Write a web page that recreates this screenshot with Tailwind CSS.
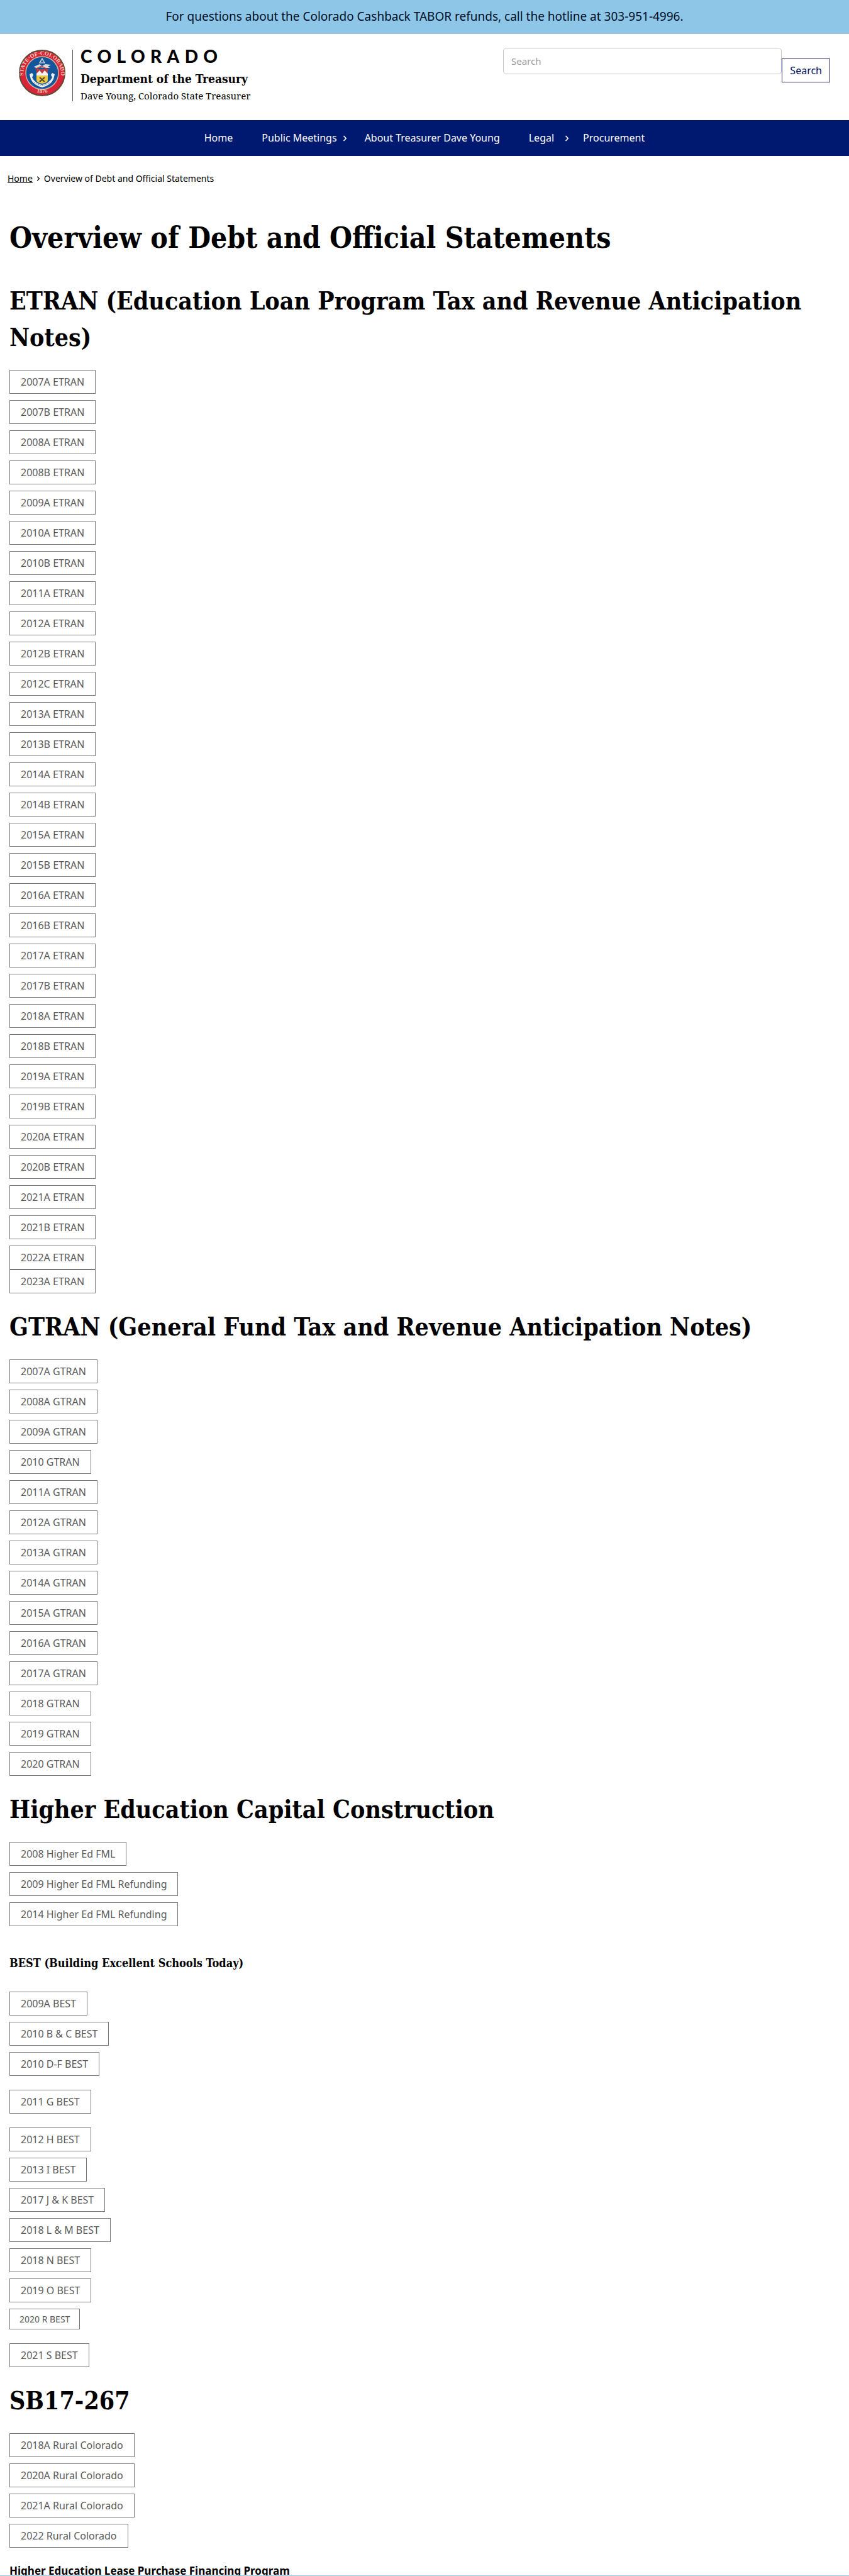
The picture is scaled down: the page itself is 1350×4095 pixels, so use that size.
<!DOCTYPE html>
<html lang="en">
<head>
<meta charset="utf-8">
<meta name="viewport" content="width=device-width, initial-scale=1">
<title>Overview of Debt and Official Statements | Department of the Treasury</title>
<script src="https://cdn.jsdelivr.net/npm/@tailwindcss/browser@4"></script>
</head>
<body class="bg-white font-['Noto_Sans',sans-serif] text-black">
<div class="border-b border-[#a9bdd0] bg-[#8ec6e7] px-4 py-[13px] text-center text-[19px] leading-[27px] text-[#001026]">For questions about the Colorado Cashback TABOR refunds, call the hotline at 303-951-4996.</div>

<header class="flex items-start justify-between pt-[22px] pr-[30px] pb-[30px] pl-[30px]">
  <a href="#" class="mt-[3px] flex items-start text-black">
    <svg class="size-[74px]" viewBox="0 0 74 74" role="img" aria-label="Seal of the State of Colorado">
      <defs>
        <path id="arcTop" d="M7.5 44 A 30 30 0 1 1 66.500 44"/>
        <path id="arcBottom" d="M17 62 A 32 32 0 0 0 57 62"/>
      </defs>
      <circle cx="37" cy="37" r="36" fill="#d92336" stroke="#5b4a35" stroke-width="2"/>
      <circle cx="37" cy="37" r="26" fill="#14569c" stroke="#c9b5a0" stroke-width="1.500"/>
      <text font-family="Liberation Serif" font-size="9" font-weight="bold" fill="#f6cdbb"><textPath href="#arcTop" startOffset="50%" text-anchor="middle">STATE·OF·COLORADO</textPath></text>
      <text font-family="Liberation Serif" font-size="9" font-weight="bold" fill="#f6cdbb"><textPath href="#arcBottom" startOffset="50%" text-anchor="middle">1876</textPath></text>
      <path d="M37 14 L41 21 H33 Z" fill="#2c68a5" stroke="#e9e6da" stroke-width="1.200"/>
      <path d="M24 27 L33 23 L37 26 L42 23 L51 24 L46 27 L50 29 L40 29 L34 28 L29 30 Z" fill="#d9dcd6"/>
      <path d="M26 31 L36 26 L47 32" fill="none" stroke="#c33b3f" stroke-width="1.500"/>
      <path d="M28 31 H46 V41 H28 Z" fill="#b83b42"/>
      <path d="M28 38 L33 33 L37 38 L41 33 L46 38 V41 H28 Z" fill="#f3f3f3"/>
      <path d="M28 41 H46 V49 Q45 53 37 54 Q29 53 28 49 Z" fill="#edc843"/>
      <path d="M33 44 L41 51 M41 44 L33 51" stroke="#4f4322" stroke-width="2"/>
      <path d="M17 39 L21 37 L23 40 L21 44 Q25 53 37 56 Q49 53 53 44 L51 40 L53 37 L57 39 L55 47 Q50 57 37 60 Q24 57 19 47 Z" fill="#eef0ee"/>
      <path d="M24 52 Q37 61 50 52" fill="none" stroke="#5a7fa9" stroke-width="1" stroke-dasharray="2 1.500"/>
    </svg>
    <span class="ml-[11px] flex flex-col border-l border-[#555] pl-3">
      <span class="font-['Lato',sans-serif] text-[28px] leading-5 font-black tracking-[0.3em]">COLORADO</span>
      <span class="mt-3 font-['DejaVu_Serif_Condensed','DejaVu_Serif',serif] text-[19px] leading-7 font-bold">Department of the Treasury</span>
      <span class="mt-1 font-['Noto_Serif',serif] text-[15px] leading-[18px] font-normal">Dave Young, Colorado State Treasurer</span>
    </span>
  </a>
  <form class="flex w-[520px] items-start" role="search">
    <label for="search" class="sr-only">Search</label>
    <input id="search" type="search" placeholder="Search" class="h-[42px] min-w-0 flex-1 rounded-[5px] border border-[#c4c4c4] px-3 text-[15px] placeholder:text-[#999]">
    <button type="submit" class="mt-[17px] h-[38px] border border-[#2a2a66] px-3 text-[16px] leading-6 text-[#000f60]">Search</button>
  </form>
</header>

<nav aria-label="Main" class="bg-[#001970] py-4 text-[16px] leading-[25px] text-white">
  <ul class="flex justify-center">
    <li><a href="#" class="block px-[23px]">Home</a></li>
    <li class="flex items-center"><a href="#" class="pl-[23px]">Public Meetings</a>
      <svg class="mr-[28px] ml-[9px] h-[10px] w-[7px]" viewBox="0 0 7 10" fill="none" stroke="currentColor" stroke-width="1.600"><path d="M1.500 1 L5.200 5 L1.500 9"/></svg></li>
    <li><a href="#" class="block pr-[23px]">About Treasurer Dave Young</a></li>
    <li class="flex items-center"><a href="#" class="pl-[23px]">Legal</a>
      <svg class="mr-[22px] ml-[17px] h-[10px] w-[7px]" viewBox="0 0 7 10" fill="none" stroke="currentColor" stroke-width="1.600"><path d="M1.500 1 L5.200 5 L1.500 9"/></svg></li>
    <li><a href="#" class="block pr-[23px]">Procurement</a></li>
  </ul>
</nav>

<nav aria-label="Breadcrumb" class="mt-6 px-3 text-[14px] leading-6">
  <ol class="flex items-center">
    <li><a href="#" class="underline">Home</a></li>
    <li class="flex items-center"><svg class="mx-1.5 h-2 w-1.5" viewBox="0 0 6 8" fill="none" stroke="currentColor" stroke-width="1.200"><path d="M1.200 .8 L4.500 4 L1.200 7.200"/></svg>Overview of Debt and Official Statements</li>
  </ol>
</nav>

<main class="mt-12 overflow-hidden px-[15px] text-[16px] [&_h1]:font-['DejaVu_Serif_Condensed','DejaVu_Serif',serif] [&_h1]:font-bold [&_h2]:mt-6 [&_h2]:mb-[23px] [&_h2]:font-['DejaVu_Serif_Condensed','DejaVu_Serif',serif] [&_h2]:text-[39px] [&_h2]:leading-[58px] [&_h2]:font-bold [&_ul]:flex [&_ul]:flex-col [&_ul]:items-start [&_ul]:gap-[10px] [&_li>a]:block [&_li>a]:border [&_li>a]:border-[#777] [&_li>a]:px-[17px] [&_li>a]:py-[6px] [&_li>a]:leading-6 [&_li>a]:text-[#5a5a5a]">
  <h1 class="mb-[37px] text-[46px] leading-[68px]">Overview of Debt and Official Statements</h1>

  <h2>ETRAN (Education Loan Program Tax and Revenue Anticipation Notes)</h2>
  <ul>
    <li><a href="#">2007A ETRAN</a></li>
    <li><a href="#">2007B ETRAN</a></li>
    <li><a href="#">2008A ETRAN</a></li>
    <li><a href="#">2008B ETRAN</a></li>
    <li><a href="#">2009A ETRAN</a></li>
    <li><a href="#">2010A ETRAN</a></li>
    <li><a href="#">2010B ETRAN</a></li>
    <li><a href="#">2011A ETRAN</a></li>
    <li><a href="#">2012A ETRAN</a></li>
    <li><a href="#">2012B ETRAN</a></li>
    <li><a href="#">2012C ETRAN</a></li>
    <li><a href="#">2013A ETRAN</a></li>
    <li><a href="#">2013B ETRAN</a></li>
    <li><a href="#">2014A ETRAN</a></li>
    <li><a href="#">2014B ETRAN</a></li>
    <li><a href="#">2015A ETRAN</a></li>
    <li><a href="#">2015B ETRAN</a></li>
    <li><a href="#">2016A ETRAN</a></li>
    <li><a href="#">2016B ETRAN</a></li>
    <li><a href="#">2017A ETRAN</a></li>
    <li><a href="#">2017B ETRAN</a></li>
    <li><a href="#">2018A ETRAN</a></li>
    <li><a href="#">2018B ETRAN</a></li>
    <li><a href="#">2019A ETRAN</a></li>
    <li><a href="#">2019B ETRAN</a></li>
    <li><a href="#">2020A ETRAN</a></li>
    <li><a href="#">2020B ETRAN</a></li>
    <li><a href="#">2021A ETRAN</a></li>
    <li><a href="#">2021B ETRAN</a></li>
    <li><a href="#">2022A ETRAN</a><a href="#">2023A ETRAN</a></li>
  </ul>

  <h2>GTRAN (General Fund Tax and Revenue Anticipation Notes)</h2>
  <ul>
    <li><a href="#">2007A GTRAN</a></li>
    <li><a href="#">2008A GTRAN</a></li>
    <li><a href="#">2009A GTRAN</a></li>
    <li><a href="#">2010 GTRAN</a></li>
    <li><a href="#">2011A GTRAN</a></li>
    <li><a href="#">2012A GTRAN</a></li>
    <li><a href="#">2013A GTRAN</a></li>
    <li><a href="#">2014A GTRAN</a></li>
    <li><a href="#">2015A GTRAN</a></li>
    <li><a href="#">2016A GTRAN</a></li>
    <li><a href="#">2017A GTRAN</a></li>
    <li><a href="#">2018 GTRAN</a></li>
    <li><a href="#">2019 GTRAN</a></li>
    <li><a href="#">2020 GTRAN</a></li>
  </ul>

  <h2>Higher Education Capital Construction</h2>
  <ul>
    <li><a href="#">2008 Higher Ed FML</a></li>
    <li><a href="#">2009 Higher Ed FML Refunding</a></li>
    <li><a href="#">2014 Higher Ed FML Refunding</a></li>
  </ul>

  <h3 class="mt-[47px] mb-[33px] font-['DejaVu_Serif_Condensed','DejaVu_Serif',serif] text-[18px] leading-6 font-bold">BEST (Building Excellent Schools Today)</h3>
  <ul>
    <li><a href="#">2009A BEST</a></li>
    <li><a href="#">2010 B &amp; C BEST</a></li>
    <li><a href="#">2010 D-F BEST</a></li>
    <li class="my-3"><a href="#">2011 G BEST</a></li>
    <li><a href="#">2012 H BEST</a></li>
    <li><a href="#">2013 I BEST</a></li>
    <li><a href="#">2017 J &amp; K BEST</a></li>
    <li><a href="#">2018 L &amp; M BEST</a></li>
    <li><a href="#">2018 N BEST</a></li>
    <li><a href="#">2019 O BEST</a></li>
    <li class="mb-3 text-[14px]"><a href="#" class="px-[15px]! py-[5px]! leading-[21px]!">2020 R BEST</a></li>
    <li><a href="#">2021 S BEST</a></li>
  </ul>

  <h2>SB17-267</h2>
  <ul>
    <li><a href="#">2018A Rural Colorado</a></li>
    <li><a href="#">2020A Rural Colorado</a></li>
    <li><a href="#">2021A Rural Colorado</a></li>
    <li><a href="#">2022 Rural Colorado</a></li>
  </ul>

  <h3 class="mt-[30px] text-[17px] leading-[14px] font-bold">Higher Education Lease Purchase Financing Program</h3>
</main>
<footer class="h-px bg-[#8ec6e7]"></footer>
</body>
</html>
